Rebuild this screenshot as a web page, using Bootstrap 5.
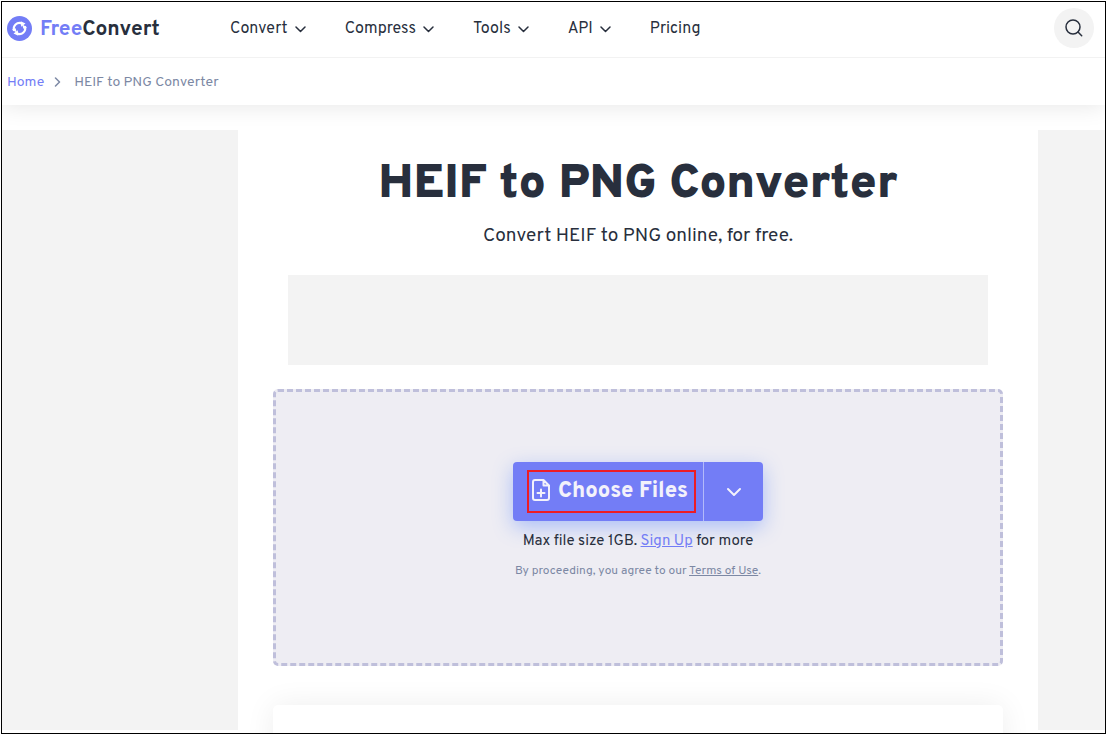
<!DOCTYPE html>
<html lang="en">
<head>
<meta charset="utf-8">
<meta name="viewport" content="width=device-width, initial-scale=1">
<title>HEIF to PNG Converter</title>
<link href="https://cdn.jsdelivr.net/npm/bootstrap@5.3.0/dist/css/bootstrap.min.css" rel="stylesheet">
<style>
:root { --ink: #282f3d; --brand: #737df6; --muted: #7c88a4; }
body { font-family: Overpass, Roboto, sans-serif; color: var(--ink); background: #fff; }
.frame { height: calc(100vh - 2px); margin: 1px 0 0 1px; border: 1px solid #000; }
.topbar { height: 56px; padding: 0 11px 3px 4px; border-bottom: 1px solid #f2f2f2; background: #fff; z-index: 2; }
.brand { width: 224px; gap: 7px; color: var(--ink); font-size: 21px; line-height: 24px; font-weight: 700; text-decoration: none; }
.brand b { color: var(--brand); font-weight: 700; }
.brand span { padding-top: 4px; }
.main-menu { gap: 39px; padding-top: 2px; }
.main-menu button, .main-menu a { gap: 7px; border: 0; padding: 0; background: none; color: var(--ink); font-size: 16px; line-height: 24px; text-decoration: none; }
.search-btn { width: 40px; height: 40px; background: #f3f3f3; border: 0; padding: 0; }
.crumbs { height: 47px; padding: 2px 5px 0; font-size: 14px; line-height: 20px; color: var(--muted); background: #fff; box-shadow: 0 0 25px rgba(0,0,0,.11); }
.crumbs a { color: var(--brand); text-decoration: none; }
.crumbs svg { margin: 0 12px 2px 8px; }
.stage { margin-top: 25px; background: #fff; z-index: 1; }
.side-ad { height: 600px; background: #f3f3f3; }
.side-left { flex: 236 1 0; }
.side-right { flex: 67 1 0; }
.content { flex: 0 1 800px; padding: 0 35px; }
.content h1 { font-size: 48px; line-height: 60px; font-weight: 900; margin: 25px 0 0; }
.subtitle { font-size: 19px; line-height: 28px; margin: 7px 0 0; }
.banner-ad { height: 90px; margin: 25px 15px 24px; background: #f3f3f3; }
.dropzone { height: 277px; padding-top: 70px; background: #eeedf3; border: 3px dashed #bfbfdb; border-radius: 5px; }
.choose { height: 59px; width: 250px; border-radius: 4px; background: var(--brand); box-shadow: 0 6px 20px rgba(70,120,255,.4); overflow: hidden; }
.choose button { border: 0; background: none; color: #f3f2fb; }
.choose-main { flex: 1; padding: 0 7px 0 14px; }
.marked { height: 43px; width: 169px; gap: 8px; border: 2px solid #ed1c24; font-size: 22px; line-height: 28px; font-weight: 800; padding: 0 0 0 3px; white-space: nowrap; }
.marked svg { margin-bottom: 3px; }
.choose .choose-more { width: 60px; border-left: 1px solid #b3bafa; padding: 0; }
.limit { font-size: 15px; line-height: 20px; margin: 11px 0 0; }
.limit a { color: var(--brand); }
.terms { font-size: 12px; line-height: 16px; margin: 11px 0 0; color: var(--muted); }
.terms a { color: inherit; }
.next-card { height: 120px; margin-top: 39px; background: #fff; border-radius: 5px; box-shadow: 0 0 30px rgba(0,0,0,.07); }
svg { display: block; flex: none; fill: none; stroke: currentColor; stroke-linecap: round; stroke-linejoin: round; }
</style>
</head>
<body>
<div class="frame overflow-hidden">
  <header class="topbar position-relative d-flex align-items-center">
    <a href="#" class="brand d-flex align-items-center">
      <svg width="27" height="27" viewBox="0 0 27 27" stroke="none"><circle cx="13.5" cy="13.5" r="12.5" fill="#737df6" stroke="none"/><g stroke="#fff" stroke-width="2.2" stroke-linecap="butt"><path d="M8.3 15.8a5.7 5.7 0 0 1 7.6-7.4"/><path d="M18.7 11.2a5.7 5.7 0 0 1-7.6 7.4"/></g><g fill="#fff" stroke="none"><path d="M14.7 6.3l4.8 2.3-4.3 3.1z"/><path d="M12.3 20.7l-4.8-2.3 4.3-3.1z"/><path d="M5.8 14.8l3.9-1.5 1 4.2z"/><path d="M21.2 12.2l-3.9 1.5-1-4.2z"/></g></svg>
      <span><b>Free</b>Convert</span>
    </a>
    <nav class="main-menu d-flex align-items-center">
      <button type="button" class="d-flex align-items-center">Convert <svg width="11" height="7" viewBox="0 0 11 7" stroke-width="1.5"><path d="M1 1l4.500 4.500L10 1"/></svg></button>
      <button type="button" class="d-flex align-items-center">Compress <svg width="11" height="7" viewBox="0 0 11 7" stroke-width="1.5"><path d="M1 1l4.500 4.500L10 1"/></svg></button>
      <button type="button" class="d-flex align-items-center">Tools <svg width="11" height="7" viewBox="0 0 11 7" stroke-width="1.5"><path d="M1 1l4.500 4.500L10 1"/></svg></button>
      <button type="button" class="d-flex align-items-center">API <svg width="11" height="7" viewBox="0 0 11 7" stroke-width="1.5"><path d="M1 1l4.500 4.500L10 1"/></svg></button>
      <a href="#">Pricing</a>
    </nav>
    <button type="button" class="search-btn rounded-circle ms-auto d-flex align-items-center justify-content-center" aria-label="Search">
      <svg width="18" height="18" viewBox="0 0 18 18" stroke-width="1.5"><circle cx="8" cy="8" r="7" stroke="#282f3d"/><path d="M13 13l3.700 3.700" stroke="#282f3d"/></svg>
    </button>
  </header>
  <nav class="crumbs d-flex align-items-center" aria-label="Breadcrumb">
    <a href="#">Home</a>
    <svg width="10" height="10" viewBox="0 0 10 10" stroke-width="1.500"><path d="M3.500 1l4 4-4 4"/></svg>
    <span>HEIF to PNG Converter</span>
  </nav>
  <div class="stage d-flex">
    <aside class="side-ad side-left"></aside>
    <main class="content text-center">
      <h1>HEIF to PNG Converter</h1>
      <p class="subtitle">Convert HEIF to PNG online, for free.</p>
      <div class="banner-ad"></div>
      <section class="dropzone d-flex flex-column align-items-center">
        <div class="choose d-flex flex-shrink-0">
          <button type="button" class="choose-main d-flex align-items-center">
            <span class="marked d-flex align-items-center">
              <svg width="18" height="22" viewBox="0 0 18 22" stroke-width="2"><path d="M11.500 1H3a2 2 0 0 0-2 2v16a2 2 0 0 0 2 2h12a2 2 0 0 0 2-2V6.500zM11.500 1v5.500H17M9 10.500v7M5.500 14h7"/></svg>
              Choose Files
            </span>
          </button>
          <button type="button" class="choose-more d-flex align-items-center justify-content-center" aria-label="More sources">
            <svg width="16" height="10" viewBox="0 0 16 10" stroke-width="2"><path d="M2 2l6 6 6-6"/></svg>
          </button>
        </div>
        <p class="limit">Max file size 1GB. <a href="#">Sign Up</a> for more</p>
        <p class="terms">By proceeding, you agree to our <a href="#">Terms of Use</a>.</p>
      </section>
      <section class="next-card"></section>
    </main>
    <aside class="side-ad side-right"></aside>
  </div>
</div>
<script src="https://cdn.jsdelivr.net/npm/bootstrap@5.3.0/dist/js/bootstrap.bundle.min.js"></script>
</body>
</html>
